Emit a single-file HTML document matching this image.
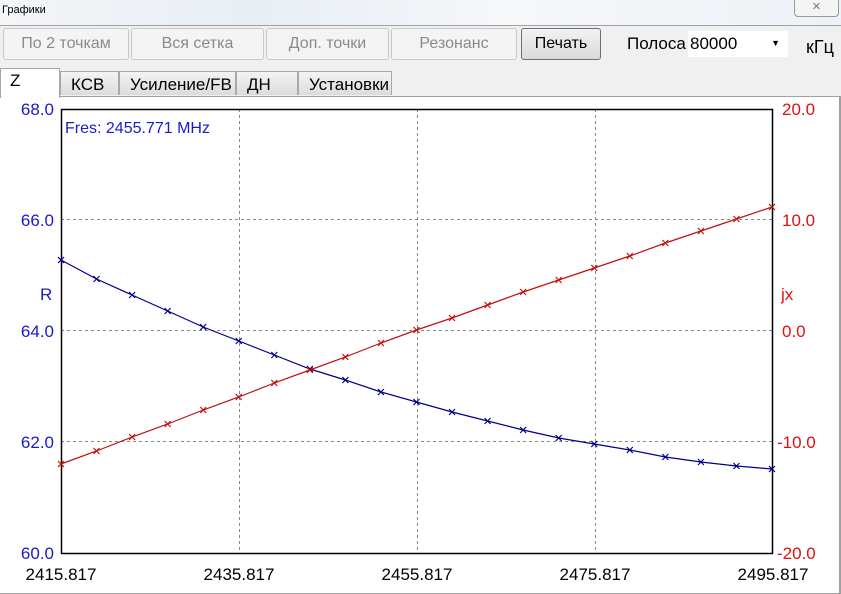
<!DOCTYPE html>
<html><head><meta charset="utf-8"><style>
body{margin:0;width:841px;height:594px;overflow:hidden;background:#f0f0f0;font-family:"Liberation Sans",Arial,sans-serif;position:relative}
.top{position:absolute;left:0;top:0;width:841px;height:25px;background:linear-gradient(90deg,#f4f6f8,#e8eef4 30%,#f6f8fa 60%,#eef2f6);border-bottom:1px solid #a0a0a0}
.title{position:absolute;left:2px;top:4px;font-size:11px;color:#000}
.close{position:absolute;left:794px;top:-1px;width:43px;height:16px;border:1px solid #999;border-radius:0 0 4px 4px;background:#f4f4f4;font-size:11px;color:#777;text-align:center;line-height:15px}
.btn{position:absolute;top:28px;height:30px;border:1px solid #c8c8c8;border-radius:3px;background:#f4f4f4;color:#8a8a8a;font-size:16px;text-align:center;line-height:30px}
.tab{position:absolute;top:71px;height:24px;border:1px solid #a8a8a8;border-bottom:none;background:linear-gradient(#f4f4f4,#dcdcdc);font-size:17px;line-height:25px;padding-left:10px;box-sizing:border-box;white-space:nowrap}
</style></head><body>
<div class="top"><div class="title">Графики</div><div class="close">✕</div></div>
<div class="btn" style="left:3px;width:124px">По 2 точкам</div>
<div class="btn" style="left:131px;width:131px">Вся сетка</div>
<div class="btn" style="left:266px;width:121px">Доп. точки</div>
<div class="btn" style="left:391px;width:124px">Резонанс</div>
<div class="btn" style="left:521px;width:78px;color:#000;background:linear-gradient(#f2f2f2,#dadada);border-color:#707070">Печать</div>
<div style="position:absolute;left:627px;top:34px;font-size:17px">Полоса</div>
<div style="position:absolute;left:688px;top:31px;width:100px;height:26px;background:#fff;font-size:17px;line-height:25px;padding-left:2px;box-sizing:border-box">80000<span style="position:absolute;right:8px;top:0;font-size:9px">▼</span></div>
<div style="position:absolute;left:806px;top:37px;font-size:18px">кГц</div>
<div style="position:absolute;left:0;top:96px;width:841px;height:498px;background:#fff;border-top:1px solid #a0a0a0;border-right:2px solid #a0a0a0;border-bottom:1px solid #a0a0a0;box-sizing:border-box"></div>
<div class="tab" style="left:60px;width:59px">КСВ</div>
<div class="tab" style="left:119px;width:117px">Усиление/FB</div>
<div class="tab" style="left:236px;width:62px">ДН</div>
<div class="tab" style="left:298px;width:94px">Установки</div>
<div style="position:absolute;left:0;top:68px;width:60px;height:30px;background:#fff;border:1px solid #a8a8a8;border-bottom:none;box-sizing:border-box;font-size:17px;padding:2px 0 0 9px">Z</div>
<svg id="s" style="position:absolute;left:0;top:0" width="841" height="594" font-family="Liberation Sans, Arial, sans-serif" font-size="17">
<g stroke="#888" stroke-dasharray="3,3" stroke-width="1">
<line x1="239.5" y1="109" x2="239.5" y2="554"/><line x1="417.5" y1="109" x2="417.5" y2="554"/><line x1="595.5" y1="109" x2="595.5" y2="554"/>
<line x1="61" y1="219.5" x2="773" y2="219.5"/><line x1="61" y1="330.5" x2="773" y2="330.5"/><line x1="61" y1="441.5" x2="773" y2="441.5"/>
</g>
<rect x="61.5" y="109.5" width="711" height="444" fill="none" stroke="#000" stroke-width="1.5"/>
<g fill="#1a1ac8" text-anchor="end"><text x="54" y="115">68.0</text><text x="54" y="226">66.0</text><text x="54" y="337">64.0</text><text x="54" y="448">62.0</text><text x="54" y="559">60.0</text></g>
<text x="40" y="300" fill="#1a1ac8">R</text>
<text x="65" y="133" fill="#1a1ac8" font-size="16">Fres: 2455.771 MHz</text>
<g fill="#e01010"><text x="782" y="115">20.0</text><text x="782" y="226">10.0</text><text x="782" y="337">0.0</text><text x="777" y="448">-10.0</text><text x="777" y="559">-20.0</text><text x="781" y="300">jx</text></g>
<g fill="#000" text-anchor="middle"><text x="61" y="580">2415.817</text><text x="239" y="580">2435.817</text><text x="417" y="580">2455.817</text><text x="595" y="580">2475.817</text><text x="773" y="580">2495.817</text></g>
</svg>
<script>
var s=document.getElementById('s'),N='http://www.w3.org/2000/svg';
var B=[260,279,295,311,327,341,355,369,380,392,402,412,421,430,438,444,450,457,462,466,469];
var R=[464,451,437,424,410,397,383,370,357,343,330,318,305,292,280,268,256,243,231,219,207];
function draw(a,c){var d='',m='';for(var i=0;i<a.length;i++){var x=61+35.55*i,y=a[i];d+=(i?'L':'M')+x+' '+y;m+='M'+(x-3)+' '+(y-3)+'l6 6M'+(x-3)+' '+(y+3)+'l6 -6';}
var p=document.createElementNS(N,'path');p.setAttribute('d',d+m);p.setAttribute('stroke',c);p.setAttribute('fill','none');p.setAttribute('stroke-width','1.2');s.appendChild(p);}
draw(B,'#00008c');draw(R,'#c01010');
</script>
</body></html>
